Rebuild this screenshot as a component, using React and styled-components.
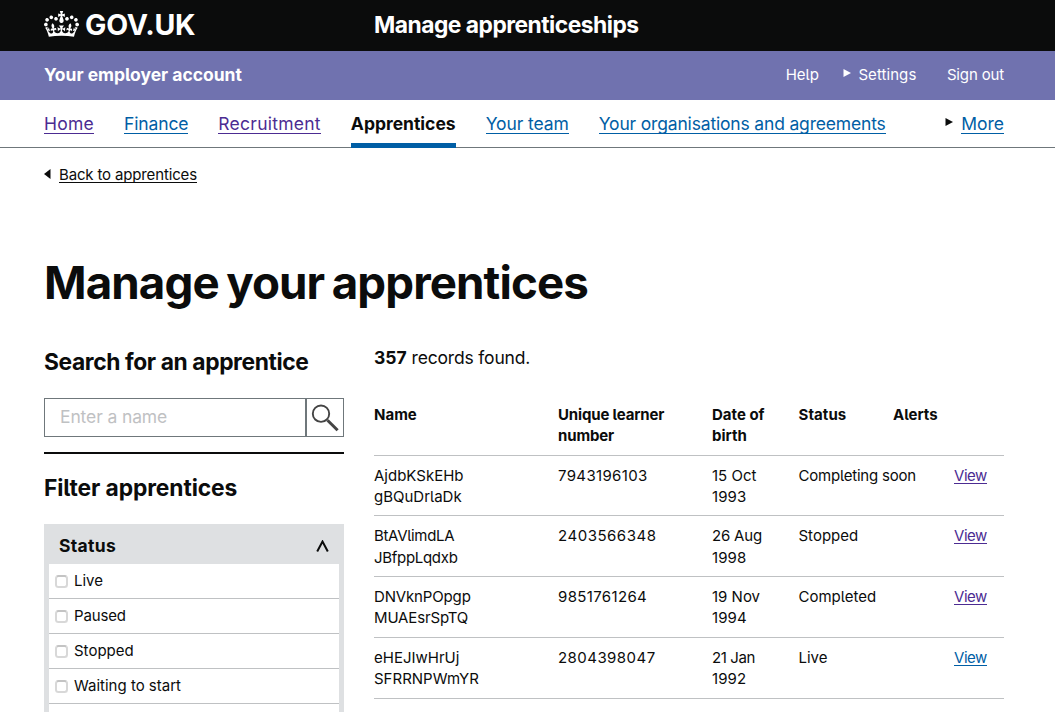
import React from 'react';
import styled, { createGlobalStyle } from 'styled-components';

const ink = '#0b0c0c';
const blue = '#005ea5';
const visited = '#4c2c92';

const Global = createGlobalStyle`
  *, *::before, *::after { box-sizing: border-box; }
  body {
    margin: 0;
    background: #fff;
    color: ${ink};
    font-family: Inter, "Noto Sans", sans-serif;
    font-size: 15px;
    line-height: 21px;
    font-feature-settings: "cv05" 1;
    font-optical-sizing: none;
    -webkit-font-smoothing: antialiased;
  }
  h1, h2, p { margin: 0; }
`;

const Page = styled.div`
  height: 712px;
  overflow: hidden;
`;

const Text = styled.span`
  letter-spacing: ${(p) => p.$track || 0}px;
  white-space: nowrap;
`;

const Container = styled.div`
  width: 960px;
  margin-left: 44px;
`;

const TopBar = styled.header`
  height: 51px;
  background: ${ink};
  color: #fff;
`;
const TopInner = styled(Container)`
  display: flex;
  align-items: center;
  height: 49px;
`;
const Brand = styled.div`
  display: flex;
  align-items: center;
  gap: 6px;
  width: 330px;
  font-size: 28.5px;
  font-weight: 700;
`;
const Crown = styled.svg`
  display: block;
  width: 35px;
  height: 26px;
  margin-top: -1px;
`;
const ServiceName = styled.div`
  padding-bottom: 1px;
  font-size: 22.8px;
  font-weight: 700;
`;

const AccountBar = styled.div`
  height: 49px;
  background: #7072af;
  color: #fff;
`;
const AccountInner = styled(Container)`
  display: flex;
  align-items: center;
  justify-content: space-between;
  height: 47px;
`;
const AccountTitle = styled.div`
  font-size: 17.5px;
  font-weight: 700;
`;
const AccountLinks = styled.div`
  display: flex;
  align-items: center;
`;
const AccountLink = styled.a`
  display: flex;
  align-items: center;
  gap: 7px;
  margin-left: ${(p) => p.$gap || 0}px;
  color: #fff;
`;
const Arrow = styled.svg`
  display: block;
  width: 8px;
  height: 8px;
  margin-top: -3px;
  fill: currentColor;
`;

const Nav = styled.nav`
  height: 48px;
  border-bottom: 1px solid #6f777b;
`;
const NavInner = styled(Container)`
  display: flex;
  gap: 30px;
  height: 48px;
  font-size: 17.5px;
`;
const NavItem = styled.div`
  height: 48px;
  padding-top: 15px;
  ${(p) => p.$active && `
    font-weight: 700;
    border-bottom: 5px solid ${blue};
  `}
  ${(p) => p.$end && `
    display: flex;
    align-items: flex-start;
    gap: 8px;
    margin-left: auto;
    svg { margin-top: 3px; }
  `}
`;
const NavText = styled.a`
  display: block;
  line-height: 18px;
  border-bottom: 1px solid ${(p) => p.$line || 'transparent'};
  color: ${(p) => p.$line || ink};
  letter-spacing: ${(p) => p.$track || 0}px;
  white-space: nowrap;
`;

const BackRow = styled.div`
  display: flex;
  align-items: flex-start;
  gap: 7px;
  height: 35px;
  padding-top: 20px;
`;
const BackArrow = styled(Arrow)`
  height: 10px;
  margin-top: 1px;
`;
const UnderLink = styled.a`
  display: inline-block;
  line-height: 14px;
  border-bottom: 1px solid currentColor;
  color: ${(p) => p.$color};
  letter-spacing: ${(p) => p.$track || 0}px;
`;

const PageTitle = styled.h1`
  margin-top: 70px;
  font-size: 45.7px;
  line-height: 60px;
  font-weight: 700;
  word-spacing: -2.5px;
`;
const Columns = styled.div`
  display: flex;
  gap: 30px;
  margin-top: 34px;
`;
const Sidebar = styled.aside`
  width: 300px;
`;
const SectionTitle = styled.h2`
  font-size: 22.8px;
  line-height: 30px;
  font-weight: 700;
`;
const SearchBox = styled.div`
  display: flex;
  height: 39px;
  margin: 21px 0 15px;
`;
const SearchField = styled.input`
  width: 262px;
  height: 39px;
  padding: 0 15px 2px;
  border: 1px solid #6f777b;
  border-radius: 0;
  outline: 0;
  color: ${ink};
  font: inherit;
  font-size: 17.5px;
  letter-spacing: -0.12px;
  &::placeholder { color: #bfc1c3; opacity: 1; }
`;
const SearchButton = styled.button`
  display: flex;
  align-items: center;
  justify-content: center;
  width: 38px;
  height: 39px;
  padding: 0;
  border: 1px solid #6f777b;
  background: #fff;
  svg { display: block; }
`;
const Rule = styled.div`
  height: 2px;
  margin-bottom: 19px;
  background: ${ink};
`;
const FilterPanel = styled.div`
  height: 188px;
  margin-top: 21px;
  padding: 0 5px;
  overflow: hidden;
  background: #dee0e2;
`;
const FilterHead = styled.div`
  display: flex;
  align-items: center;
  justify-content: space-between;
  height: 40px;
  padding: 3px 10px 0;
  font-size: 17.5px;
  font-weight: 700;
`;
const Option = styled.label`
  display: flex;
  align-items: center;
  gap: 6px;
  height: 35px;
  padding: 0 6px;
  border-bottom: 1px solid #bfc1c3;
  background: #fff;
`;
const OptionName = styled(Text)`
  padding-bottom: 1px;
`;
const Check = styled.span`
  width: 13px;
  height: 13px;
  margin-top: 1px;
  border: 2px solid #d8d8d8;
  border-top-color: #c4c4c4;
  border-radius: 3.5px;
  background: #fff;
`;

const Results = styled.main`
  width: 630px;
`;
const Count = styled.p`
  height: 56.5px;
  font-size: 17.5px;
  line-height: 22px;
`;
const Row = styled.div`
  display: grid;
  grid-template-columns: 184px 154px 86.5px 94.5px 61px 50px;
  height: ${(p) => (p.$head ? 52 : 60.75)}px;
  padding-top: ${(p) => (p.$head ? 0.4 : 9.2)}px;
  border-bottom: 1px solid #bfc1c3;
  font-weight: ${(p) => (p.$head ? 700 : 400)};
  line-height: 21.3px;
  white-space: nowrap;
`;
const Cell = styled.div`
  letter-spacing: ${(p) => p.$track || 0}px;
`;

const nav = [
  { label: 'Home', color: visited, track: 0.22 },
  { label: 'Finance', color: blue, track: -0.12 },
  { label: 'Recruitment', color: visited, track: 0.25 },
  { label: 'Apprentices', active: true, track: 0 },
  { label: 'Your team', color: blue, track: -0.1 },
  { label: 'Your organisations and agreements', color: blue, track: -0.17 },
];

const statuses = [['Live', 0], ['Paused', -0.15], ['Stopped', 0], ['Waiting to start', 0]];

const apprentices = [
  { first: 'AjdbKSkEHb', last: 'gBQuDrlaDk', uln: '7943196103', day: '15 Oct', year: '1993', status: 'Completing soon', statusTrack: -0.2, ulnTrack: 0.35, color: visited },
  { first: 'BtAVlimdLA', last: 'JBfppLqdxb', nameTrack: -0.3, uln: '2403566348', day: '26 Aug', dayTrack: -0.2, year: '1998', status: 'Stopped', ulnTrack: 0.52, color: visited },
  { first: 'DNVknPOpgp', last: 'MUAEsrSpTQ', nameTrack: -0.15, uln: '9851761264', day: '19 Nov', year: '1994', status: 'Completed', ulnTrack: 0.35, color: visited },
  { first: 'eHEJIwHrUj', last: 'SFRRNPWmYR', nameTrack: 0, uln: '2804398047', day: '21 Jan', dayTrack: -0.4, year: '1992', status: 'Live', ulnTrack: 0.45, color: blue },
];

const CrownMark = () => (
  <Crown viewBox="0 0 132 97" preserveAspectRatio="none" aria-hidden="true">
    <path fill="currentColor" fillRule="evenodd" d="M25 30.2c3.5 1.5 7.7-.2 9.1-3.7 1.5-3.6-.2-7.8-3.9-9.2-3.6-1.4-7.6.3-9.1 3.9-1.4 3.5.3 7.5 3.9 9zM9 39.5c3.6 1.5 7.8-.2 9.2-3.7 1.5-3.6-.2-7.8-3.9-9.1-3.6-1.5-7.6.2-9.1 3.8-1.4 3.5.3 7.5 3.8 9zM4.4 57.2c3.5 1.5 7.7-.2 9.1-3.8 1.5-3.6-.2-7.7-3.9-9.1-3.5-1.5-7.6.3-9.1 3.8-1.4 3.5.3 7.6 3.9 9.1zm38.3-21.4c3.5 1.5 7.7-.2 9.1-3.8 1.5-3.6-.2-7.7-3.9-9.1-3.6-1.5-7.6.3-9.1 3.8-1.3 3.6.4 7.7 3.9 9.1zm64.4-5.6c-3.6 1.5-7.8-.2-9.1-3.7-1.5-3.6.2-7.8 3.8-9.2 3.6-1.4 7.7.3 9.2 3.9 1.3 3.5-.4 7.5-3.9 9zm15.9 9.3c-3.6 1.5-7.7-.2-9.1-3.7-1.5-3.6.2-7.8 3.7-9.1 3.6-1.5 7.7.2 9.2 3.8 1.5 3.5-.3 7.5-3.8 9zm4.7 17.7c-3.6 1.5-7.8-.2-9.2-3.8-1.5-3.6.2-7.7 3.9-9.1 3.6-1.5 7.7.3 9.2 3.8 1.3 3.5-.4 7.6-3.9 9.1zM89.3 35.8c-3.6 1.5-7.8-.2-9.2-3.8-1.4-3.6.2-7.7 3.9-9.1 3.6-1.5 7.7.3 9.2 3.8 1.4 3.6-.3 7.7-3.9 9.1zM69.7 17.7l8.9 4.7V9.3l-8.9 2.8c-.2-.3-.5-.6-.9-.9L72.4 0H59.6l3.5 11.2c-.3.3-.6.5-.9.9l-8.8-2.8v13.1l8.8-4.7c.3.3.6.7.9.9l-5 15.4v.1c-.2.8-.4 1.6-.4 2.4 0 4.1 3.1 7.5 7 8.1h.2c.3 0 .7.1 1 .1.4 0 .7 0 1-.1h.2c4-.6 7.1-4.1 7.1-8.1 0-.8-.1-1.7-.4-2.4V34l-5.1-15.4c.4-.2.7-.6 1-.9zM66 92.8c16.9 0 32.8 1.1 47.1 3.2 4-16.9 8.9-26.7 14-33.5l-9.6-3.4c1 4.9 1.1 7.2 0 10.2-1.5-1.4-3-4.3-4.2-8.7L108.6 76c2.8-2 5-3.2 7.5-3.3-4.4 9.4-10 11.9-13.6 11.2-4.3-.8-6.3-4.6-5.6-7.9 1-4.7 5.7-5.9 8-.5 4.3-8.7-3-11.4-7.6-8.8 7.1-7.2 7.9-13.5 2.1-21.1-8 6.1-8.1 12.3-4.5 20.8-4.7-5.4-12.1-2.5-9.5 6.2 3.4-5.2 7.9-2 7.2 3.1-.6 4.3-6.4 7.8-13.5 7.2-10.3-.9-10.9-8-11.2-13.8 2.5-.5 7.1 1.8 11 7.3L80.2 60c-4.1 4.4-8 5.3-12.3 5.4 1.4-4.4 8-11.6 8-11.6H55.5s6.4 7.2 7.9 11.6c-4.2-.1-8-1-12.3-5.4l1.4 16.4c3.9-5.5 8.5-7.7 10.9-7.3-.3 5.8-.9 12.8-11.1 13.8-7.2.6-12.9-2.9-13.5-7.2-.7-5 3.8-8.3 7.1-3.1 2.7-8.7-4.6-11.6-9.4-6.2 3.7-8.5 3.6-14.7-4.6-20.8-5.8 7.6-5 13.9 2.2 21.1-4.7-2.6-11.9.1-7.7 8.8 2.3-5.5 7.1-4.2 8.1.5.7 3.3-1.3 7.1-5.7 7.9-3.5.7-9-1.8-13.5-11.2 2.5.1 4.7 1.3 7.5 3.3l-4.7-15.4c-1.2 4.4-2.7 7.2-4.3 8.7-1.1-3-.9-5.3 0-10.2l-9.5 3.4c5 6.9 9.9 16.7 14 33.5 14.8-2.1 30.8-3.2 47.7-3.2z" />
  </Crown>
);

const ArrowRight = () => (
  <Arrow viewBox="0 0 8 8" aria-hidden="true"><path d="M0.5 0 8 4 0.5 8z" /></Arrow>
);

export default function App() {
  return (
    <Page>
      <Global />
      <TopBar>
        <TopInner>
          <Brand><CrownMark /><Text $track={-0.2}>GOV.UK</Text></Brand>
          <ServiceName><Text $track={-0.5}>Manage apprenticeships</Text></ServiceName>
        </TopInner>
      </TopBar>
      <AccountBar>
        <AccountInner>
          <AccountTitle><Text $track={-0.02}>Your employer account</Text></AccountTitle>
          <AccountLinks>
            <AccountLink><Text>Help</Text></AccountLink>
            <AccountLink $gap={24.5}><ArrowRight /><Text $track={0.07}>Settings</Text></AccountLink>
            <AccountLink $gap={30.5}><Text $track={-0.15}>Sign out</Text></AccountLink>
          </AccountLinks>
        </AccountInner>
      </AccountBar>
      <Nav>
        <NavInner>
          {nav.map((n) => (
            <NavItem key={n.label} $active={n.active}>
              <NavText $line={n.color} $track={n.track}>{n.label}</NavText>
            </NavItem>
          ))}
          <NavItem $end><ArrowRight /><NavText $line={blue}>More</NavText></NavItem>
        </NavInner>
      </Nav>
      <Container>
        <BackRow>
          <BackArrow viewBox="0 0 8 10" aria-hidden="true"><path d="M6.5 0v10L0 5z" /></BackArrow>
          <UnderLink $color={ink} $track={-0.15}>Back to apprentices</UnderLink>
        </BackRow>
        <PageTitle><Text $track={-0.9}>Manage your apprentices</Text></PageTitle>
        <Columns>
          <Sidebar>
            <SectionTitle><Text $track={-0.39}>Search for an apprentice</Text></SectionTitle>
            <SearchBox>
              <SearchField placeholder="Enter a name" />
              <SearchButton aria-label="Search">
                <svg width="28" height="28" viewBox="0 0 28 28" fill="none" stroke="#444">
                  <circle cx="10" cy="9.7" r="8.2" strokeWidth="1.9" />
                  <path d="M16.5 16.2 26.6 26.3" strokeWidth="3" />
                </svg>
              </SearchButton>
            </SearchBox>
            <Rule />
            <SectionTitle><Text $track={-0.1}>Filter apprentices</Text></SectionTitle>
            <FilterPanel>
              <FilterHead>
                <Text $track={0.3}>Status</Text>
                <svg width="13" height="12" viewBox="0 0 13 12" fill="none" stroke={ink} strokeWidth="2">
                  <path d="M1.2 11.5 6.5 1.5l5.3 10" />
                </svg>
              </FilterHead>
              {statuses.map(([s, track]) => (
                <Option key={s}><Check /><OptionName $track={track}>{s}</OptionName></Option>
              ))}
              <Option />
            </FilterPanel>
          </Sidebar>
          <Results>
            <Count><b>357</b> <Text $track={-0.18}>records found.</Text></Count>
            <Row $head>
              <Cell>Name</Cell>
              <Cell $track={-0.15}>Unique learner<br />number</Cell>
              <Cell>Date of<br />birth</Cell>
              <Cell $track={0.08}>Status</Cell>
              <Cell>Alerts</Cell>
              <Cell />
            </Row>
            {apprentices.map((a) => (
              <Row key={a.uln}>
                <Cell $track={a.nameTrack}>{a.first}<br />{a.last}</Cell>
                <Cell $track={a.ulnTrack}>{a.uln}</Cell>
                <Cell $track={a.dayTrack}>{a.day}<br /><Text $track={0.1}>{a.year}</Text></Cell>
                <Cell $track={a.statusTrack}>{a.status}</Cell>
                <Cell />
                <Cell><UnderLink $color={a.color} $track={-0.45}>View</UnderLink></Cell>
              </Row>
            ))}
          </Results>
        </Columns>
      </Container>
    </Page>
  );
}
